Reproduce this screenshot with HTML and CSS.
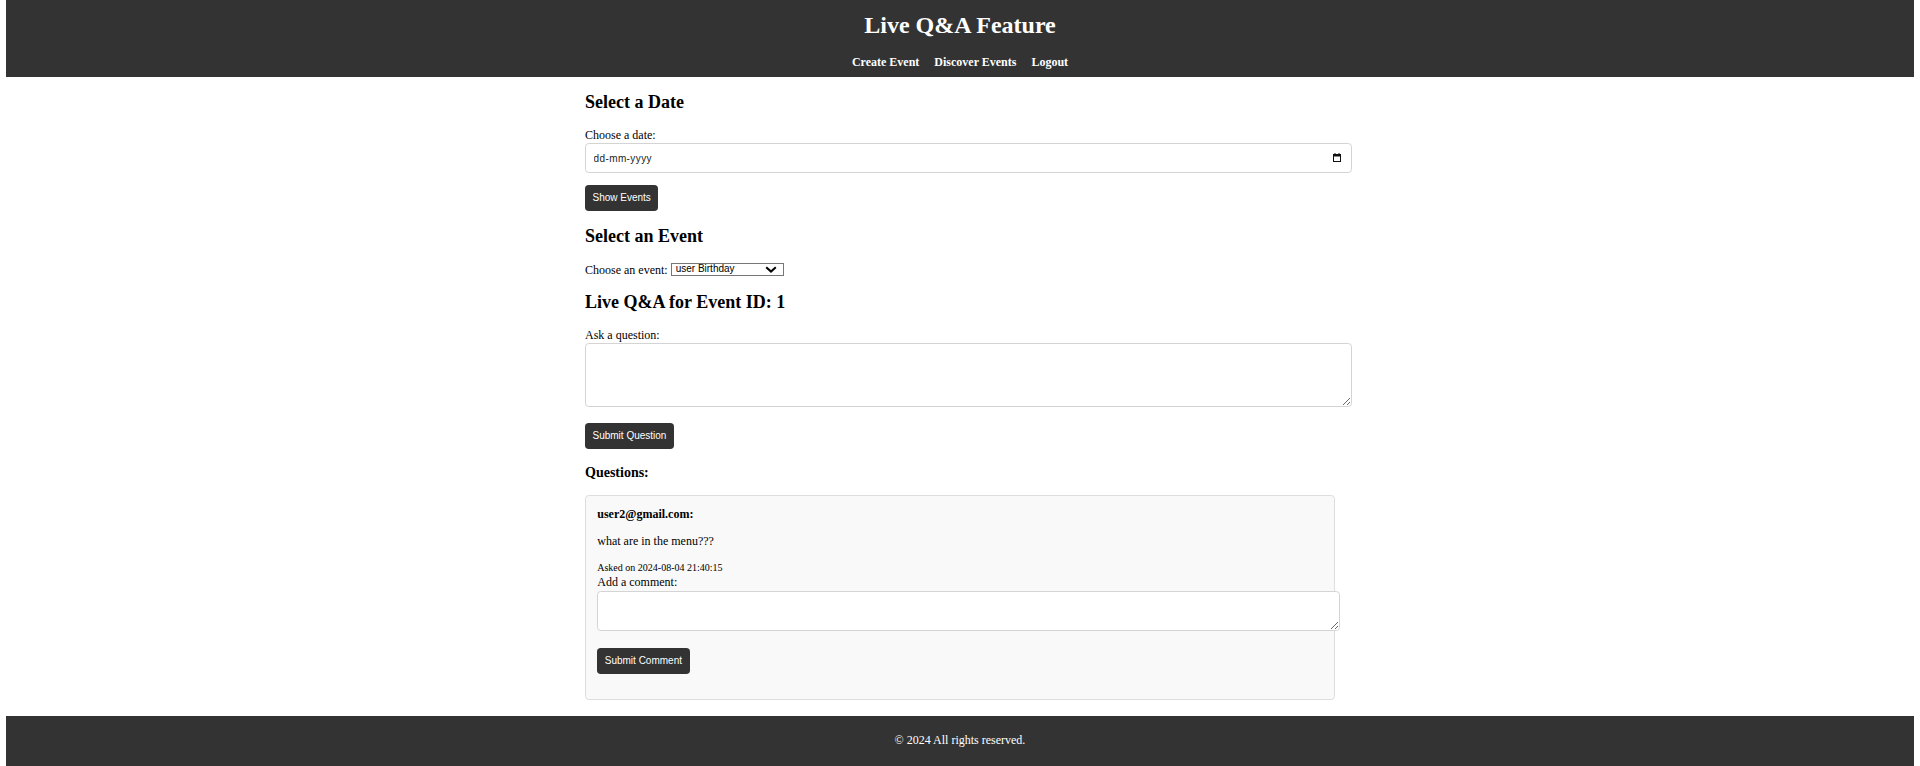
FILE: index.html
```html
<!DOCTYPE html>
<html lang="en">
<head>
<meta charset="utf-8">
<title>Live Q&amp;A Feature</title>
<link rel="stylesheet" href="styles.css">
</head>
<body>
<header class="site-header">
  <h1 class="site-title">Live Q&amp;A Feature</h1>
  <nav class="site-nav"><a href="#">Create Event</a><a href="#">Discover Events</a><a href="#">Logout</a></nav>
</header>
<main class="container">
  <section class="block">
    <h2 class="section-title">Select a Date</h2>
    <label class="field-label" for="date">Choose a date:</label>
    <div class="date-field">
      <input class="text-input" id="date" type="text" placeholder="dd-mm-yyyy">
      <svg class="cal-icon" viewBox="0 0 8 9" width="8" height="9" aria-hidden="true">
        <rect x="0.5" y="1.5" width="7" height="7" fill="none" stroke="#111" stroke-width="1"/>
        <rect x="0" y="1" width="8" height="2.5" fill="#111"/>
        <rect x="1.5" y="0" width="1" height="1.5" fill="#111"/>
        <rect x="5.5" y="0" width="1" height="1.5" fill="#111"/>
      </svg>
    </div>
    <button class="btn btn-show" type="button">Show Events</button>
  </section>
  <section class="block">
    <h2 class="section-title">Select an Event</h2>
    <div class="event-row">
      <label class="inline-label" for="event">Choose an event:</label>
      <span class="select-wrap">
        <select class="event-select" id="event"><option>user Birthday</option></select>
        <svg class="chevron" viewBox="0 0 12 7" width="12" height="7" aria-hidden="true">
          <polyline points="1.2,1.2 6,5.6 10.8,1.2" fill="none" stroke="#000" stroke-width="2"/>
        </svg>
      </span>
    </div>
  </section>
  <section class="block">
    <h2 class="section-title tight">Live Q&amp;A for Event ID: 1</h2>
    <label class="field-label" for="question">Ask a question:</label>
    <textarea class="text-area question-input" id="question"></textarea>
    <button class="btn btn-question" type="button">Submit Question</button>
    <h3 class="questions-title">Questions:</h3>
    <div class="question-card">
      <strong class="q-author">user2@gmail.com:</strong>
      <p class="q-text">what are in the menu???</p>
      <small class="q-meta">Asked on 2024-08-04 21:40:15</small>
      <form class="comment-form">
        <label class="comment-label" for="comment">Add a comment:</label>
        <textarea class="text-area comment-input" id="comment"></textarea>
        <button class="btn btn-comment" type="button">Submit Comment</button>
      </form>
    </div>
  </section>
</main>
<footer class="site-footer">
  <p class="footer-text">© 2024 All rights reserved.</p>
</footer>
</body>
</html>
```
FILE: styles.css
```css
html {
  overflow: hidden;
}

body {
  margin: 0 6px;
  font-family: "Liberation Serif", "Times New Roman", serif;
  font-size: 12px;
  color: #000;
  background: #fff;
}

/* Header */
.site-header {
  background: #333;
  color: #fff;
  text-align: center;
  padding: 11px 0 8px;
}

.site-title {
  margin: 0;
  font-size: 24px;
  line-height: 28px;
  font-weight: bold;
}

.site-nav {
  margin-top: 16px;
  font-size: 12px;
  line-height: 14px;
}

.site-nav a {
  color: #fff;
  text-decoration: none;
  font-weight: bold;
  margin: 0 7.5px;
}

/* Main */
.container {
  width: 750px;
  margin: 0 auto;
}

.section-title {
  font-size: 18px;
  line-height: 21px;
  font-weight: bold;
  margin: 15px 0 0;
}

.section-title.tight {
  margin-top: 14.5px;
}

.field-label {
  display: block;
  margin-top: 15px;
  line-height: 14px;
}

.date-field {
  position: relative;
  width: calc(100% + 17px);
  margin-top: 1.3px;
}

.text-input {
  display: block;
  box-sizing: border-box;
  width: 100%;
  height: 30px;
  margin: 0;
  padding: 7.5px;
  border: 1px solid #d4d4d4;
  border-radius: 3.75px;
  background: #fff;
  font-family: "Liberation Sans", Arial, sans-serif;
  font-size: 10px;
  letter-spacing: 0.4px;
  color: #000;
}

.text-input::placeholder {
  color: #222;
  opacity: 1;
}

.cal-icon {
  position: absolute;
  right: 11px;
  top: 10px;
  pointer-events: none;
}

.btn {
  display: block;
  background: #333;
  color: #fff;
  border: 0;
  border-radius: 3.75px;
  font-family: "Liberation Sans", Arial, sans-serif;
  font-size: 10px;
  line-height: 11.5px;
  padding: 7px 7.5px;
  margin: 0;
  cursor: pointer;
}

.btn-show {
  margin-top: 12px;
}

.btn-question {
  margin-top: 15.6px;
}

.btn-comment {
  margin-top: 16.6px;
  margin-bottom: 14px;
}

/* Event select row */
.event-row {
  display: flex;
  align-items: flex-start;
  gap: 3.5px;
  margin-top: 15px;
  height: 15.5px;
}

.inline-label {
  line-height: 14px;
  margin-top: 1px;
}

.select-wrap {
  position: relative;
  display: block;
  margin-top: 1.5px;
}

.event-select {
  display: block;
  appearance: none;
  -webkit-appearance: none;
  box-sizing: border-box;
  width: 113px;
  height: 12.5px;
  margin: 0;
  padding: 0 0 0 3.5px;
  border: 1px solid #767676;
  border-radius: 0;
  background: #fff;
  font-family: "Liberation Sans", Arial, sans-serif;
  font-size: 10px;
  line-height: 10.5px;
  color: #000;
}

.chevron {
  position: absolute;
  right: 7px;
  top: 3px;
  pointer-events: none;
}

/* Textareas */
.text-area {
  display: block;
  box-sizing: border-box;
  width: calc(100% + 17px);
  margin: 0;
  padding: 7.5px;
  border: 1px solid #d4d4d4;
  border-radius: 3.75px;
  background: #fff;
  font-family: "Liberation Mono", monospace;
  font-size: 10px;
}

.question-input {
  margin-top: 1.3px;
  height: 64.4px;
}

.comment-input {
  margin-top: 1.75px;
  height: 40.7px;
}

/* Questions */
.questions-title {
  font-size: 14px;
  line-height: 16px;
  font-weight: bold;
  margin: 16px 0 0;
}

.question-card {
  margin-top: 14.2px;
  background: #f9f9f9;
  border: 1px solid #ddd;
  border-radius: 3.75px;
  padding: 11.25px;
}

.q-author {
  display: block;
  font-weight: bold;
  line-height: 14px;
}

.q-text {
  margin: 13px 0 0;
  line-height: 14px;
}

.q-meta {
  display: block;
  margin-top: 13px;
  font-size: 10px;
  line-height: 14px;
}

.comment-form {
  margin: 0;
}

.comment-label {
  display: block;
  line-height: 14px;
}

/* Footer */
.site-footer {
  margin-top: 16px;
  height: 50px;
  box-sizing: border-box;
  padding-top: 17px;
  background: #333;
  color: #fff;
  text-align: center;
}

.footer-text {
  margin: 0;
  line-height: 14px;
}
```
